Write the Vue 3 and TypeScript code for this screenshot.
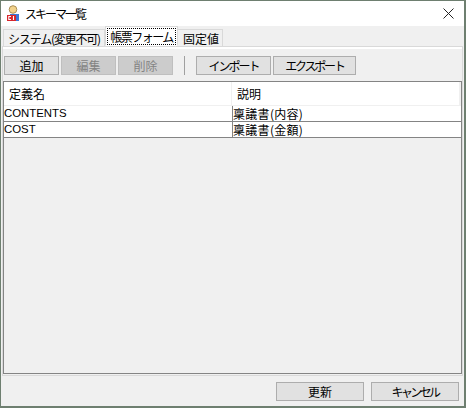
<script setup lang="ts">
const rows = [
  { name: 'CONTENTS', desc: '稟議書(内容)' },
  { name: 'COST', desc: '稟議書(金額)' },
]
</script>

<template>
  <div class="window">
    <header class="titlebar">
      <svg class="appicon" width="12" height="17" viewBox="0 0 12 17">
        <circle cx="6" cy="4.5" r="3.8" fill="#f3d38c" stroke="#a98d55" />
        <path d="M3 9h9v7H3z" fill="#3b78d8" />
        <path d="M0 10h9v6H0z" fill="#d8262c" />
        <path d="M4 11.5H1.8v3H4M6.5 11v4" fill="none" stroke="#fff" stroke-width="1.1" />
      </svg>
      <span class="title">スキーマ一覧</span>
      <svg class="close" width="11" height="11" viewBox="0 0 11 11">
        <path d="M.5.5l10 10M10.5.5l-10 10" stroke="#222" fill="none" />
      </svg>
    </header>
    <div class="tabs">
      <div class="tab first">システム(変更不可)</div>
      <div class="tab active"><span class="focus">帳票フォーム</span></div>
      <div class="tab third">固定値</div>
    </div>
    <div class="panel">
      <div class="toolbar">
        <button class="btn small">追加</button>
        <button class="btn small disabled">編集</button>
        <button class="btn small disabled">削除</button>
        <span class="sep"></span>
        <button class="btn wide">インポート</button>
        <button class="btn wider">エクスポート</button>
      </div>
      <div class="grid">
        <div class="row head">
          <div class="cell c1">定義名</div>
          <div class="cell c2">説明</div>
        </div>
        <div v-for="r in rows" :key="r.name" class="row data">
          <div class="cell c1">{{ r.name }}</div>
          <div class="cell c2">{{ r.desc }}</div>
        </div>
      </div>
    </div>
    <footer class="footer">
      <button class="btn action">更新</button>
      <button class="btn action kana">キャンセル</button>
    </footer>
  </div>
</template>

<style>
html, body { margin: 0; padding: 0; }
</style>

<style scoped>
.window {
  box-sizing: border-box;
  width: 466px;
  height: 408px;
  border: 1px solid #6e7f70;
  border-width: 1px 2px 2px 1px;
  background: #f0f0f0;
  display: flex;
  flex-direction: column;
  font-family: "Noto Sans CJK JP", "Liberation Sans", sans-serif;
  font-size: 12px;
  color: #000;
}
.titlebar {
  height: 25px;
  background: #fff;
  display: flex;
  align-items: center;
  padding-left: 6px;
  padding-right: 10px;
  flex: none;
}
.appicon { margin-right: 6px; }
.title { flex: 1; letter-spacing: -2px; }
.tabs {
  display: flex;
  height: 20px;
  flex: none;
  position: relative;
  z-index: 1;
  padding-left: 2px;
  white-space: nowrap;
}
.tab {
  box-sizing: border-box;
  display: flex;
  align-items: center;
  justify-content: center;
  background: #f0f0f0;
  border: 1px solid #d9d9d9;
  border-bottom: none;
  margin-top: 3px;
  height: 17px;
}
.first { width: 102px; letter-spacing: -1.2px; }
.third { width: 45px; border-left: none; padding-left: 2px; }
.active {
  width: 73px;
  height: 20px;
  margin-top: 0;
  background: #fff;
  border-bottom: 1px solid #fff;
  letter-spacing: -1.5px;
}
.focus {
  outline: 1px dotted #000;
  padding: 0 2px;
  line-height: 15px;
}
.panel {
  box-sizing: border-box;
  flex: none;
  height: 330px;
  margin: 0 1px 0 1px;
  border: 1px solid #d9d9d9;
  box-shadow: inset 0 2px 0 #fff;
  padding: 9px 0 1px 0;
  display: flex;
  flex-direction: column;
}
.toolbar {
  display: flex;
  align-items: center;
  gap: 2px;
  height: 19px;
  flex: none;
  padding-left: 1px;
}
.btn {
  box-sizing: border-box;
  height: 19px;
  padding: 0;
  border: 1px solid #adadad;
  background: #e1e1e1;
  font: inherit;
  color: #000;
}
.small { width: 55px; }
.disabled { background: #cccccc; border-color: #bfbfbf; color: #838383; }
.sep { width: 1px; height: 19px; background: #a0a0a0; margin: 0 9px; }
.wide { width: 75px; letter-spacing: -2px; }
.wider { width: 83px; letter-spacing: -2.2px; }
.kana { letter-spacing: -2.6px; }
.grid {
  box-sizing: border-box;
  flex: 1;
  min-height: 0;
  margin-top: 6px;
  border: 1px solid #848484;
  display: flex;
  flex-direction: column;
  width: 459px;
}
.row { display: flex; flex: none; box-sizing: border-box; }
.head { height: 24px; background: #fff; border-bottom: 1px solid #f0f0f0; margin-right: 1px; }
.head .cell { padding-left: 5px; align-items: center; display: flex; border-right: 1px solid #f0f0f0; }
.data { height: 16px; background: #fff; border-bottom: 1px solid #848484; font-size: 12px; }
.cell { box-sizing: border-box; line-height: 15px; white-space: nowrap; }
.c1 { width: 228px; }
.c2 { flex: 1; }
.data .c1 { font-family: "Liberation Sans", sans-serif; font-size: 11.4px; }
.data .c2 { border-left: 1px solid #848484; letter-spacing: 0.3px; }
.footer {
  flex: none;
  height: 30px;
  display: flex;
  justify-content: flex-end;
  gap: 7px;
  padding: 6px 5px 0 0;
  box-sizing: border-box;
}
.action { width: 88px; height: 19px; }
</style>
